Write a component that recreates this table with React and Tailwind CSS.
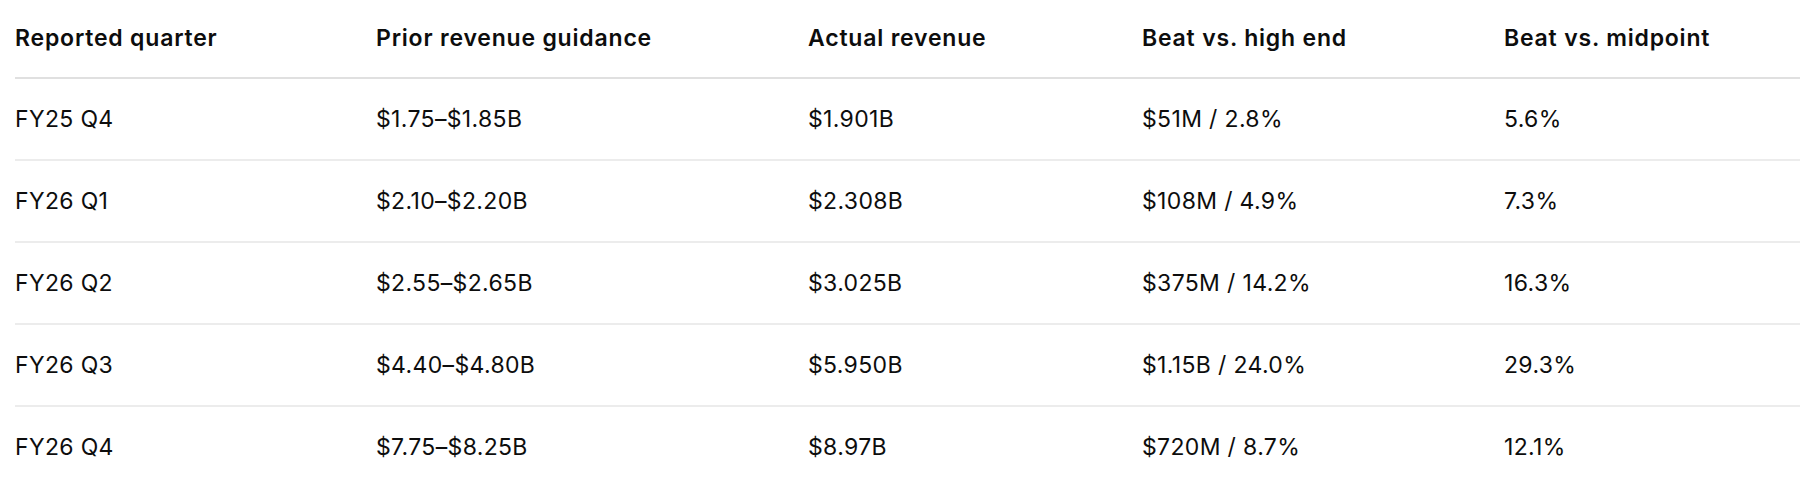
const rows = [
  ['FY25 Q4', '$1.75–$1.85B', '$1.901B', '$51M / 2.8%', '5.6%'],
  ['FY26 Q1', '$2.10–$2.20B', '$2.308B', '$108M / 4.9%', '7.3%'],
  ['FY26 Q2', '$2.55–$2.65B', '$3.025B', '$375M / 14.2%', '16.3%'],
  ['FY26 Q3', '$4.40–$4.80B', '$5.950B', '$1.15B / 24.0%', '29.3%'],
  ['FY26 Q4', '$7.75–$8.25B', '$8.97B', '$720M / 8.7%', '12.1%'],
]

const headers = [
  'Reported quarter',
  'Prior revenue guidance',
  'Actual revenue',
  'Beat vs. high end',
  'Beat vs. midpoint',
]

const cols = 'grid grid-cols-[361px_432px_334px_362px_1fr]'

export default function App() {
  return (
    <div className="h-[484px] overflow-hidden bg-white pl-[15px] font-['Inter',sans-serif] text-[23px] tracking-[0.015em] text-[#0d0d0d]">
      <div className={`${cols} h-[79px] items-center border-b-2 border-[#e0e0e0] font-semibold tracking-[0.035em]`}>
        {headers.map((h) => (
          <div key={h}>{h}</div>
        ))}
      </div>
      {rows.map((r) => (
        <div key={r[0]} className={`${cols} h-[82px] items-center border-b-2 border-[#ececec]`}>
          {r.map((c, i) => (
            <div key={i}>{c}</div>
          ))}
        </div>
      ))}
    </div>
  )
}
